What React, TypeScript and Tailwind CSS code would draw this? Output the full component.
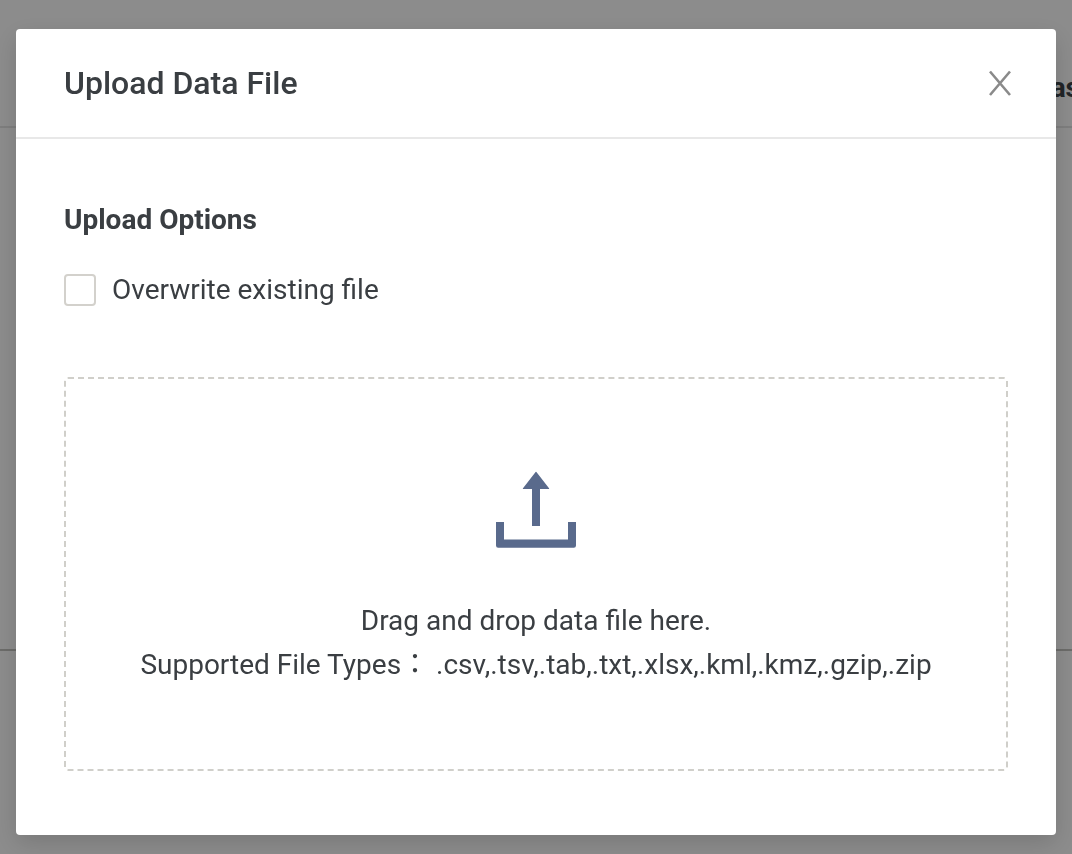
function UploadIcon() {
  return (
    <svg className="h-20 w-20" viewBox="0 0 80 80" fill="#596a8c" aria-hidden="true">
      <path d="M39.2 2.4a1 1 0 0 1 1.6 0L53 18.2c.4.5.1.9-.5.9H44V56h-8V19.1h-8.500c-.6 0-.9-.4-.5-.9z" />
      <path d="M0 52h8v17.500h64V52h8v23.500a2.200 2.200 0 0 1-2.200 2.200H2.200A2.200 2.200 0 0 1 0 75.500z" />
    </svg>
  );
}

function CloseIcon() {
  return (
    <svg className="h-7 w-7" viewBox="0 0 28 28" fill="none" stroke="#8a8a8a" strokeWidth="2.600" aria-hidden="true">
      <path d="M4 2.500L24 26M24 2.500L4 26" />
    </svg>
  );
}

function Backdrop() {
  return (
    <div className="flex min-h-screen flex-col bg-white" aria-hidden="true">
      <div className="flex h-32 items-end justify-end overflow-hidden border-b-2 border-[#e6e6e6] pb-[18px]">
        <span className="-mr-2 text-[28px] leading-10 font-bold text-[#3d4247]">as</span>
      </div>
      <div className="h-[523px] border-b-2 border-[#c4c4c0]" />
    </div>
  );
}

export default function App() {
  return (
    <div className="font-[Roboto,'Noto_Sans_CJK_TC',sans-serif] text-[28px] leading-11 text-[#3a3e42]">
      <Backdrop />
      <div className="fixed inset-0 overflow-auto bg-black/45 px-4 pt-[29px] pb-[19px]">
        <div
          role="dialog"
          aria-modal="true"
          aria-labelledby="upload-title"
          className="rounded bg-white shadow-[0_8px_24px_rgba(0,0,0,0.15)]"
        >
          <header className="flex items-center justify-between border-b-2 border-[#e8e8e8] px-12 py-8">
            <h1 id="upload-title" className="text-[32px] leading-11 font-medium">
              Upload Data File
            </h1>
            <button type="button" aria-label="Close" className="-mr-3 flex h-10 w-10 items-center justify-center">
              <CloseIcon />
            </button>
          </header>
          <div className="px-12 pt-[59px] pb-16">
            <h2 className="font-bold">Upload Options</h2>
            <label className="mt-[26px] flex items-center gap-4">
              <input
                type="checkbox"
                className="h-8 w-8 appearance-none rounded border-2 border-[#d3d1cc] bg-white checked:bg-[#596a8c]"
              />
              <span>Overwrite existing file</span>
            </label>
            <div className="mt-[65px] flex flex-col items-center rounded border-2 border-dashed border-[#d0cfca] px-4 pt-[91px] pb-[82px] text-center">
              <UploadIcon />
              <p className="mt-[49px]">Drag and drop data file here.</p>
              <p lang="zh-Hant">Supported File Types： .csv,.tsv,.tab,.txt,.xlsx,.kml,.kmz,.gzip,.zip</p>
            </div>
          </div>
        </div>
      </div>
    </div>
  );
}
